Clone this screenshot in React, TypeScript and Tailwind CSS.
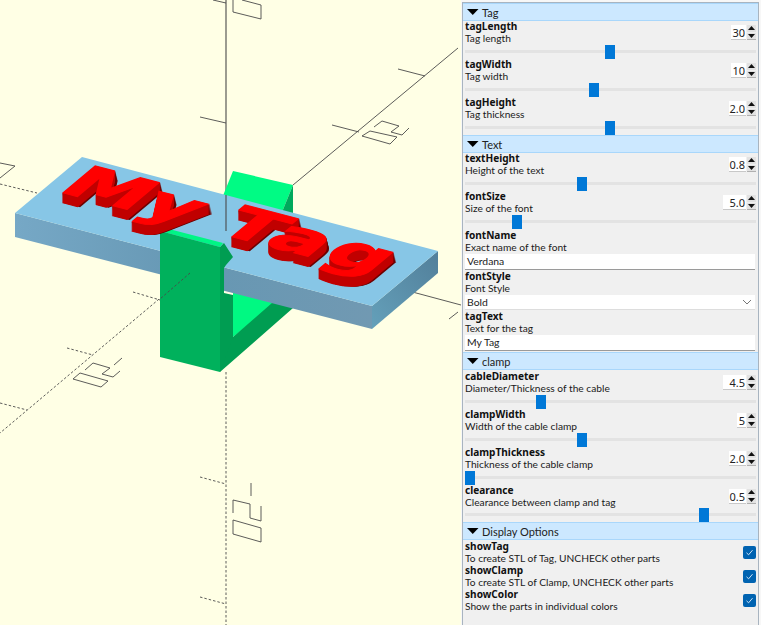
import React from "react";

const font = "font-['Lato','Noto_Sans',sans-serif]";

function Header({ label }: { label: string }) {
  return (
    <div className="flex h-[18px] items-center border-y border-[#a9d7fb] bg-[#cce8ff] pl-[4px] text-[11px] leading-none text-[#222]">
      <svg width="12" height="6" viewBox="0 0 12 6" className="mr-[3px] shrink-0">
        <path d="M0 0H11.5L5.75 6Z" fill="#000" />
      </svg>
      <span>{label}</span>
    </div>
  );
}

function Spin({ value, w }: { value: string; w: string }) {
  return (
    <div className="mt-[4px] mr-[2px] flex h-[15px] items-stretch self-start">
      <div className={`${w} flex items-center justify-end border-b border-[#c8c8c8] bg-white pr-[1px] font-['Noto_Sans'] text-[11px] leading-none text-[#222]`}>
        {value}
      </div>
      <div className="ml-[1px] flex w-[9px] flex-col gap-[1px] border-b border-[#b0b0b0]">
        <div className="flex flex-1 items-center justify-center bg-[#e2e2e2]">
          <svg width="7" height="4" viewBox="0 0 7 4"><path d="M3.5 0L7 4H0Z" fill="#111" /></svg>
        </div>
        <div className="flex flex-1 items-center justify-center bg-[#e2e2e2]">
          <svg width="7" height="4" viewBox="0 0 7 4"><path d="M0 0H7L3.5 4Z" fill="#111" /></svg>
        </div>
      </div>
    </div>
  );
}

function Titles({ name, desc }: { name: string; desc: string }) {
  return (
    <div className="-mt-[1px] min-w-0 flex-1 text-[10.2px] leading-[12px] text-[#1a1a1a]">
      <div className="font-['Noto_Sans'] text-[10.1px] font-bold text-[#111]">{name}</div>
      <div>{desc}</div>
    </div>
  );
}

function SliderRow({ name, desc, value, w, left, h = "h-[38px]" }: { name: string; desc: string; value: string; w: string; left: number; h?: string }) {
  return (
    <div className={`${h} flex flex-col`}>
      <div className="flex h-[24px] pl-[2px]">
        <Titles name={name} desc={desc} />
        <Spin value={value} w={w} />
      </div>
      <div className="relative mx-[2px] h-[14px]">
        <div className="absolute inset-x-0 top-[5px] h-[3px] bg-[#e3e3e3]" />
        <div className="absolute top-0 h-[14px] w-[10px] bg-[#0078d7]" style={{ left }} />
      </div>
    </div>
  );
}

function TextRow({ name, desc, value, select }: { name: string; desc: string; value: string; select?: boolean }) {
  return (
    <div className="mt-[1px]">
      <div className="flex h-[24px] pl-[2px]"><Titles name={name} desc={desc} /></div>
      <div className={`ml-[2px] mr-[3px] flex items-center justify-between bg-white pl-[2px] pr-[2px] text-[10.4px] leading-none text-[#222] ${select ? "h-[15px] border-b border-[#dddddd]" : "h-[16px] border-b border-[#9a9a9a]"}`}>
        <span>{value}</span>
        {select && (
          <svg width="10" height="6" viewBox="0 0 10 6" className="mr-[1px]"><path d="M1 1L5 5L9 1" fill="none" stroke="#777" strokeWidth="1" /></svg>
        )}
      </div>
    </div>
  );
}

function CheckRow({ name, desc }: { name: string; desc: string }) {
  return (
    <div className="flex h-[24px] items-start pl-[2px]">
      <Titles name={name} desc={desc} />
      <div className="mr-[2px] mt-[5px] flex h-[13px] w-[13px] items-center justify-center rounded-[2px] bg-[#0063b1]">
        <svg width="9" height="9" viewBox="0 0 9 9"><path d="M1.5 4.8L3.6 6.8L7.5 2.2" fill="none" stroke="#cfe4f7" strokeWidth="1" /></svg>
      </div>
    </div>
  );
}

function Viewport() {
  const line = "#4a4a4a";
  const layers = [10, 9, 8, 7, 6, 5, 4, 3, 2, 1];
  return (
    <svg width="461" height="625" viewBox="0 0 461 625" className="block">
      <defs>
        <linearGradient id="front" x1="0" x2="1" y1="0" y2="0">
          <stop offset="0" stopColor="#76a8c6" />
          <stop offset="0.5" stopColor="#6697b3" />
          <stop offset="1" stopColor="#7199b2" />
        </linearGradient>
        <linearGradient id="side" x1="0" x2="1" y1="1" y2="0">
          <stop offset="0" stopColor="#64a0ba" />
          <stop offset="1" stopColor="#527f9a" />
        </linearGradient>
        <text id="tagword" transform="matrix(11.9 3.1 -6.7 5.6 56 191)" fontFamily="'DejaVu Sans',sans-serif" fontWeight="700" fontSize="6.6" strokeWidth="0.14">
          My <tspan letterSpacing="0.4">Tag</tspan>
        </text>
      </defs>
      <g fill="none" stroke={line} strokeWidth="0.9">
        <path d="M226 0V231" strokeWidth="1.1" />
        <path d="M293 185L458 48" />
        <path d="M405 290L461 305" />
        <path d="M200 117L226 123M213 0L226 3M332 125L359 132M398 69L425 76" />
        <path d="M233 0V12L261 19V5L242 0" />
        <path d="M374 127L382 121L399 126L391 132L402 135L409 128" />
        <path d="M362 136L370 131L397 137L390 144Z" />
        <path d="M449 319L458 312" />
        <path d="M0 163L15 166L0 178" />
        <g strokeDasharray="2.5 2">
          <path d="M190 273L0 433" />
          <path d="M0 184L37 193" />
          <path d="M226 372V625" />
          <path d="M133 292L160 300M67 348L93 355M0 403L27 410M200 477L226 484M200 597L226 604" />
        </g>
        <path d="M251 483V496M233 513V500L250 504V518L261 521V506" />
        <path d="M233 520V534L261 542V528Z" />
        <path d="M114 365L122 358M85 370L93 363L110 368L102 374L113 377L120 371" />
        <path d="M73 379L80 373L108 381L101 387Z" />
      </g>

      <polygon points="233,171 293,185 282,212 220,203" fill="#00fb84" />
      <polygon points="293,185 282,212 293,216" fill="#00a95c" />
      <polygon points="233,285 233,337 285,295" fill="#00f982" />
      <polygon points="233,337 280,296 293,300 293,308 220,372 220,290" fill="#009d52" />

      <polygon points="15,213 372,306 372,329 15,237" fill="url(#front)" />
      <polygon points="372,306 438,251 438,273 372,329" fill="url(#side)" />
      <polygon points="15,213 82,157 438,251 372,306" fill="#87c6e6" />

      <polygon points="220,247 224,243 233,257 226,265 224,268 224,293 233,295 233,337 220,372" fill="#009d52" />
      <polygon points="160,231 165,228 223,243 220,247" fill="#00f585" />
      <polygon points="160,231 220,247 220,372 160,357" fill="#00b15c" />

      {layers.map((i) => (
        <g key={`d${i}`} transform={`translate(${i * 0.25} ${i})`} fill="#6e0000" stroke="#6e0000">
          <use href="#tagword" />
        </g>
      ))}
      {layers.map((i) => (
        <g key={`m${i}`} transform={`translate(0 ${i})`} fill="#c00000" stroke="#c00000">
          <use href="#tagword" />
        </g>
      ))}
      <g fill="#ff0000" stroke="#ff0000"><use href="#tagword" /></g>

      <path d="M226 195V231" stroke={line} strokeWidth="1.1" />
      <path d="M190 273L160 299" stroke={line} strokeWidth="0.9" strokeDasharray="2.5 2" />
    </svg>
  );
}

export default function App() {
  return (
    <div className={`${font} flex h-[625px] w-[761px] overflow-hidden bg-[#f7f7f7]`}>
      <div className="h-[625px] w-[461px] shrink-0 bg-[#ffffe5]">
        <Viewport />
      </div>
      <div className="mt-[2px] ml-[1px] h-[623px] w-[297px] shrink-0 border-x border-t border-[#a8b4c0] bg-[#f0f0f0]">
        <Header label="Tag" />
        <SliderRow name="tagLength" desc="Tag length" value="30" w="w-[15px]" left={140} />
        <SliderRow name="tagWidth" desc="Tag width" value="10" w="w-[15px]" left={124} />
        <SliderRow name="tagHeight" desc="Tag thickness" value="2.0" w="w-[17px]" left={140} />
        <Header label="Text" />
        <SliderRow name="textHeight" desc="Height of the text" value="0.8" w="w-[17px]" left={112} />
        <SliderRow name="fontSize" desc="Size of the font" value="5.0" w="w-[23px]" left={47} />
        <TextRow name="fontName" desc="Exact name of the font" value="Verdana" />
        <TextRow name="fontStyle" desc="Font Style" value="Bold" select />
        <TextRow name="tagText" desc="Text for the tag" value="My Tag" />
        <div className="mt-[1px]"><Header label="clamp" /></div>
        <div className="mt-[1px]">
          <SliderRow name="cableDiameter" desc="Diameter/Thickness of the cable" value="4.5" w="w-[23px]" left={71} />
          <SliderRow name="clampWidth" desc="Width of the cable clamp" value="5" w="w-[9px]" left={112} />
          <SliderRow name="clampThickness" desc="Thickness of the cable clamp" value="2.0" w="w-[17px]" left={0} />
          <SliderRow name="clearance" desc="Clearance between clamp and tag" value="0.5" w="w-[17px]" left={234} h="h-[37px]" />
        </div>
        <Header label="Display Options" />
        <div className="mt-[1px]">
          <CheckRow name="showTag" desc="To create STL of Tag, UNCHECK other parts" />
          <CheckRow name="showClamp" desc="To create STL of Clamp, UNCHECK other parts" />
          <CheckRow name="showColor" desc="Show the parts in individual colors" />
        </div>
      </div>
    </div>
  );
}
